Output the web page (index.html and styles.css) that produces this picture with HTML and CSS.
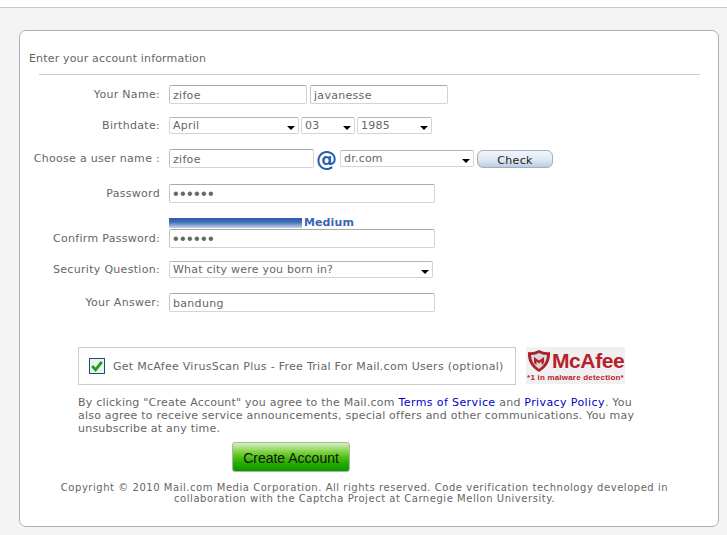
FILE: index.html
```html
<!DOCTYPE html>
<html lang="en">
<head>
<meta charset="utf-8">
<title>Create Account</title>
<link rel="stylesheet" href="styles.css">
</head>
<body>
<div class="topbar"></div>
<main class="page">
  <form class="card">
    <h1 class="title">Enter your account information</h1>
    <hr class="rule">
    <div class="row row-name">
      <label class="lbl">Your Name:</label>
      <div class="fields">
        <input class="inp w138" type="text" value="zifoe">
        <input class="inp w138" type="text" value="javanesse">
      </div>
    </div>
    <div class="row row-birth">
      <label class="lbl">Birthdate:</label>
      <div class="fields tight">
        <div class="sel w130">April</div>
        <div class="sel w54">03</div>
        <div class="sel w75">1985</div>
      </div>
    </div>
    <div class="row row-user">
      <label class="lbl">Choose a user name :</label>
      <div class="fields">
        <input class="inp w145" type="text" value="zifoe">
        <span class="at">@</span>
        <div class="sel w135">dr.com</div>
        <button class="check" type="button">Check</button>
      </div>
    </div>
    <div class="row row-pass">
      <label class="lbl">Password</label>
      <div class="fields"><input class="inp pw w266" type="password" value="secret"></div>
    </div>
    <div class="meter"><span class="bar"></span><span class="meter-text">Medium</span></div>
    <div class="row row-confirm">
      <label class="lbl">Confirm Password:</label>
      <div class="fields"><input class="inp pw w266" type="password" value="secret"></div>
    </div>
    <div class="row row-q">
      <label class="lbl">Security Question:</label>
      <div class="fields"><div class="sel w264">What city were you born in?</div></div>
    </div>
    <div class="row row-a">
      <label class="lbl">Your Answer:</label>
      <div class="fields"><input class="inp w266" type="text" value="bandung"></div>
    </div>
    <div class="offer">
      <div class="offer-box">
        <span class="checkbox">
          <svg viewBox="0 0 14 14" width="14" height="14"><path d="M2.2 7 L5.6 10.8 L11.8 2.8" fill="none" stroke="#17a31f" stroke-width="2.8"/></svg>
        </span>
        <span>Get McAfee VirusScan Plus - Free Trial For Mail.com Users (optional)</span>
      </div>
      <div class="logo">
        <div class="logo-top">
          <svg class="shield" viewBox="0 0 24 24" width="24" height="24">
            <path d="M1 3 Q6 4 12 1 Q18 4 23 3 Q24 16 12 23 Q0 16 1 3Z" fill="#a8242c"/>
            <path d="M4 6 Q9 6 12 4 Q15 6 20 6 Q20 14 12 20 Q4 14 4 6Z" fill="#d9d9d9"/>
            <path d="M7 14 L7 8 L12 11.5 L17 8 L17 14 L14.5 16 L14.5 12.5 L12 14.5 L9.5 12.5 L9.5 16Z" fill="#b8202a"/>
          </svg>
          <span class="brand">McAfee</span>
        </div>
        <div class="tag">*1 in malware detection*</div>
      </div>
    </div>
    <p class="legal">By clicking "Create Account" you agree to the Mail.com <a href="#">Terms of Service</a> and <a href="#">Privacy Policy</a>. You also agree to receive service announcements, special offers and other communications. You may unsubscribe at any time.</p>
    <button class="create" type="button">Create Account</button>
    <p class="copy">Copyright © 2010 Mail.com Media Corporation. All rights reserved. Code verification technology developed in<br>collaboration with the Captcha Project at Carnegie Mellon University.</p>
  </form>
</main>
</body>
</html>
```
FILE: styles.css
```css
* { box-sizing: border-box; }
html, body { margin: 0; height: 100%; }
body {
  background: #f4f4f4;
  font-family: "DejaVu Sans", Verdana, sans-serif;
  font-size: 11px;
  color: #666;
  letter-spacing: .3px;
  overflow: hidden;
}
.topbar { height: 8px; background: #fff; border-bottom: 1px solid #b9ccd0; }
.page { padding: 22px 8px 8px 19px; }
.card {
  width: 700px;
  height: 497px;
  background: #fff;
  border: 1px solid #a3b4c0;
  border-radius: 7px;
  padding: 21px 0 0 9px;
}
.title { margin: 0; font-size: 11px; font-weight: normal; line-height: 14px; color: #666; letter-spacing: .17px; }
.rule { margin: 8px 18px 0 10px; border: 0; border-top: 1px solid #ccc; }
.row { display: flex; align-items: center; }
.lbl { width: 131px; text-align: right; flex: none; color: #666; line-height: 14px; }
.fields { display: flex; align-items: center; gap: 3px; margin-left: 9px; }
.row-name { margin-top: 10px; }
.row-birth { margin-top: 13px; }
.row-user { margin-top: 15px; }
.row-pass { margin-top: 16px; }
.row-confirm { margin-top: 1px; }
.row-q { margin-top: 13px; }
.row-a { margin-top: 15px; }
.tight { gap: 2px; }
.inp {
  height: 19px;
  border: 1px solid #d4d4d4;
  border-top-color: #a9a9a9;
  border-left-color: #c4c4c4;
  border-radius: 2px;
  background: #fff;
  padding: 1px 3px 0;
  font: 11px "DejaVu Sans", Verdana, sans-serif;
  letter-spacing: .3px;
  color: #666;
  outline: none;
}
.pw { font: 16px "Liberation Sans", Arial, sans-serif; letter-spacing: 1.4px; padding-top: 1px; }
.sel {
  position: relative;
  height: 17px;
  border: 1px solid #d4d4d4;
  border-top-color: #b5b5b5;
  border-radius: 2px;
  background: #fff;
  padding: 0 3px;
  line-height: 16px;
  color: #666;
  letter-spacing: .22px;
  white-space: nowrap;
}
.sel::after {
  content: "";
  position: absolute;
  right: 3px;
  top: 8px;
  border: 4px solid transparent;
  border-top: 4px solid #000;
  border-bottom: 0;
}
.w138 { width: 138px; }
.w145 { width: 145px; }
.w266 { width: 266px; }
.w130 { width: 130px; }
.w54 { width: 54px; }
.w75 { width: 75px; }
.w135 { width: 134px; }
.w264 { width: 264px; }
.at {
  font: bold 21px/21px "DejaVu Sans", Verdana, sans-serif;
  color: #2a5caa;
  letter-spacing: 0;
  width: 21px;
  height: 19px;
  margin-left: -1px;
  text-align: center;
}
.check {
  width: 76px;
  height: 18px;
  margin-left: 0;
  padding: 4px 0 0;
  line-height: 12px;
  border: 1px solid #a0b0c0;
  border-radius: 6px;
  background: linear-gradient(#f2f6fb, #dfe8f2 55%, #b9cde2);
  font-family: "DejaVu Sans", Verdana, sans-serif;
  font-size: 11px;
  letter-spacing: .3px;
  color: #222;
}
.meter { display: flex; align-items: center; margin: 14px 0 0 140px; height: 11px; }
.bar { display: block; width: 133px; height: 10px; background: linear-gradient(#2f5ca8, #3f6cb6 40%, #c6d4ea); }
.meter-text { margin-left: 2px; font-weight: bold; color: #3a66b5; font-size: 11px; line-height: 11px; letter-spacing: .1px; }
.offer { display: flex; align-items: flex-start; margin: 35px 0 0 49px; }
.offer-box {
  display: flex;
  align-items: center;
  width: 438px;
  height: 38px;
  border: 1px solid #ccc;
  padding-left: 10px;
  gap: 8px;
  letter-spacing: .28px;
}
.checkbox {
  display: flex;
  align-items: center;
  justify-content: center;
  flex: none;
  width: 16px;
  height: 16px;
  border: 1px solid #1d4f7c;
  background: #eef1ee;
}
.logo {
  width: 99px;
  height: 37px;
  margin-left: 10px;
  background: #f0f0f0;
  padding: 1px 0 0 1px;
  overflow: hidden;
  letter-spacing: 0;
}
.logo-top { display: flex; align-items: center; gap: 1px; height: 25px; }
.shield { flex: none; }
.brand { font: bold 21px/25px "Liberation Sans", Arial, sans-serif; color: #b8202a; letter-spacing: -.4px; }
.tag { font: bold 8px/9px "Liberation Sans", Arial, sans-serif; color: #b8202a; white-space: nowrap; text-align: center; width: 97px; letter-spacing: .2px; }
.legal { margin: 11px 0 0 49px; width: 562px; line-height: 13px; color: #666; letter-spacing: .22px; }
.legal a { color: #00c; text-decoration: none; letter-spacing: .4px; }
.create {
  display: block;
  width: 118px;
  height: 30px;
  margin: 7px 0 0 203px;
  padding: 2px 0 0;
  border: 1px solid #a9b8a0;
  border-radius: 3px;
  background: linear-gradient(#d8efc4, #70cc2e 38%, #2cb000 68%, #0a9600);
  font: 14px "Liberation Sans", Arial, sans-serif;
  letter-spacing: 0;
  color: #111;
}
.copy { margin: 10px 0 0 19px; width: 633px; text-align: center; font-size: 10px; line-height: 11px; color: #666; letter-spacing: .54px; }
```
